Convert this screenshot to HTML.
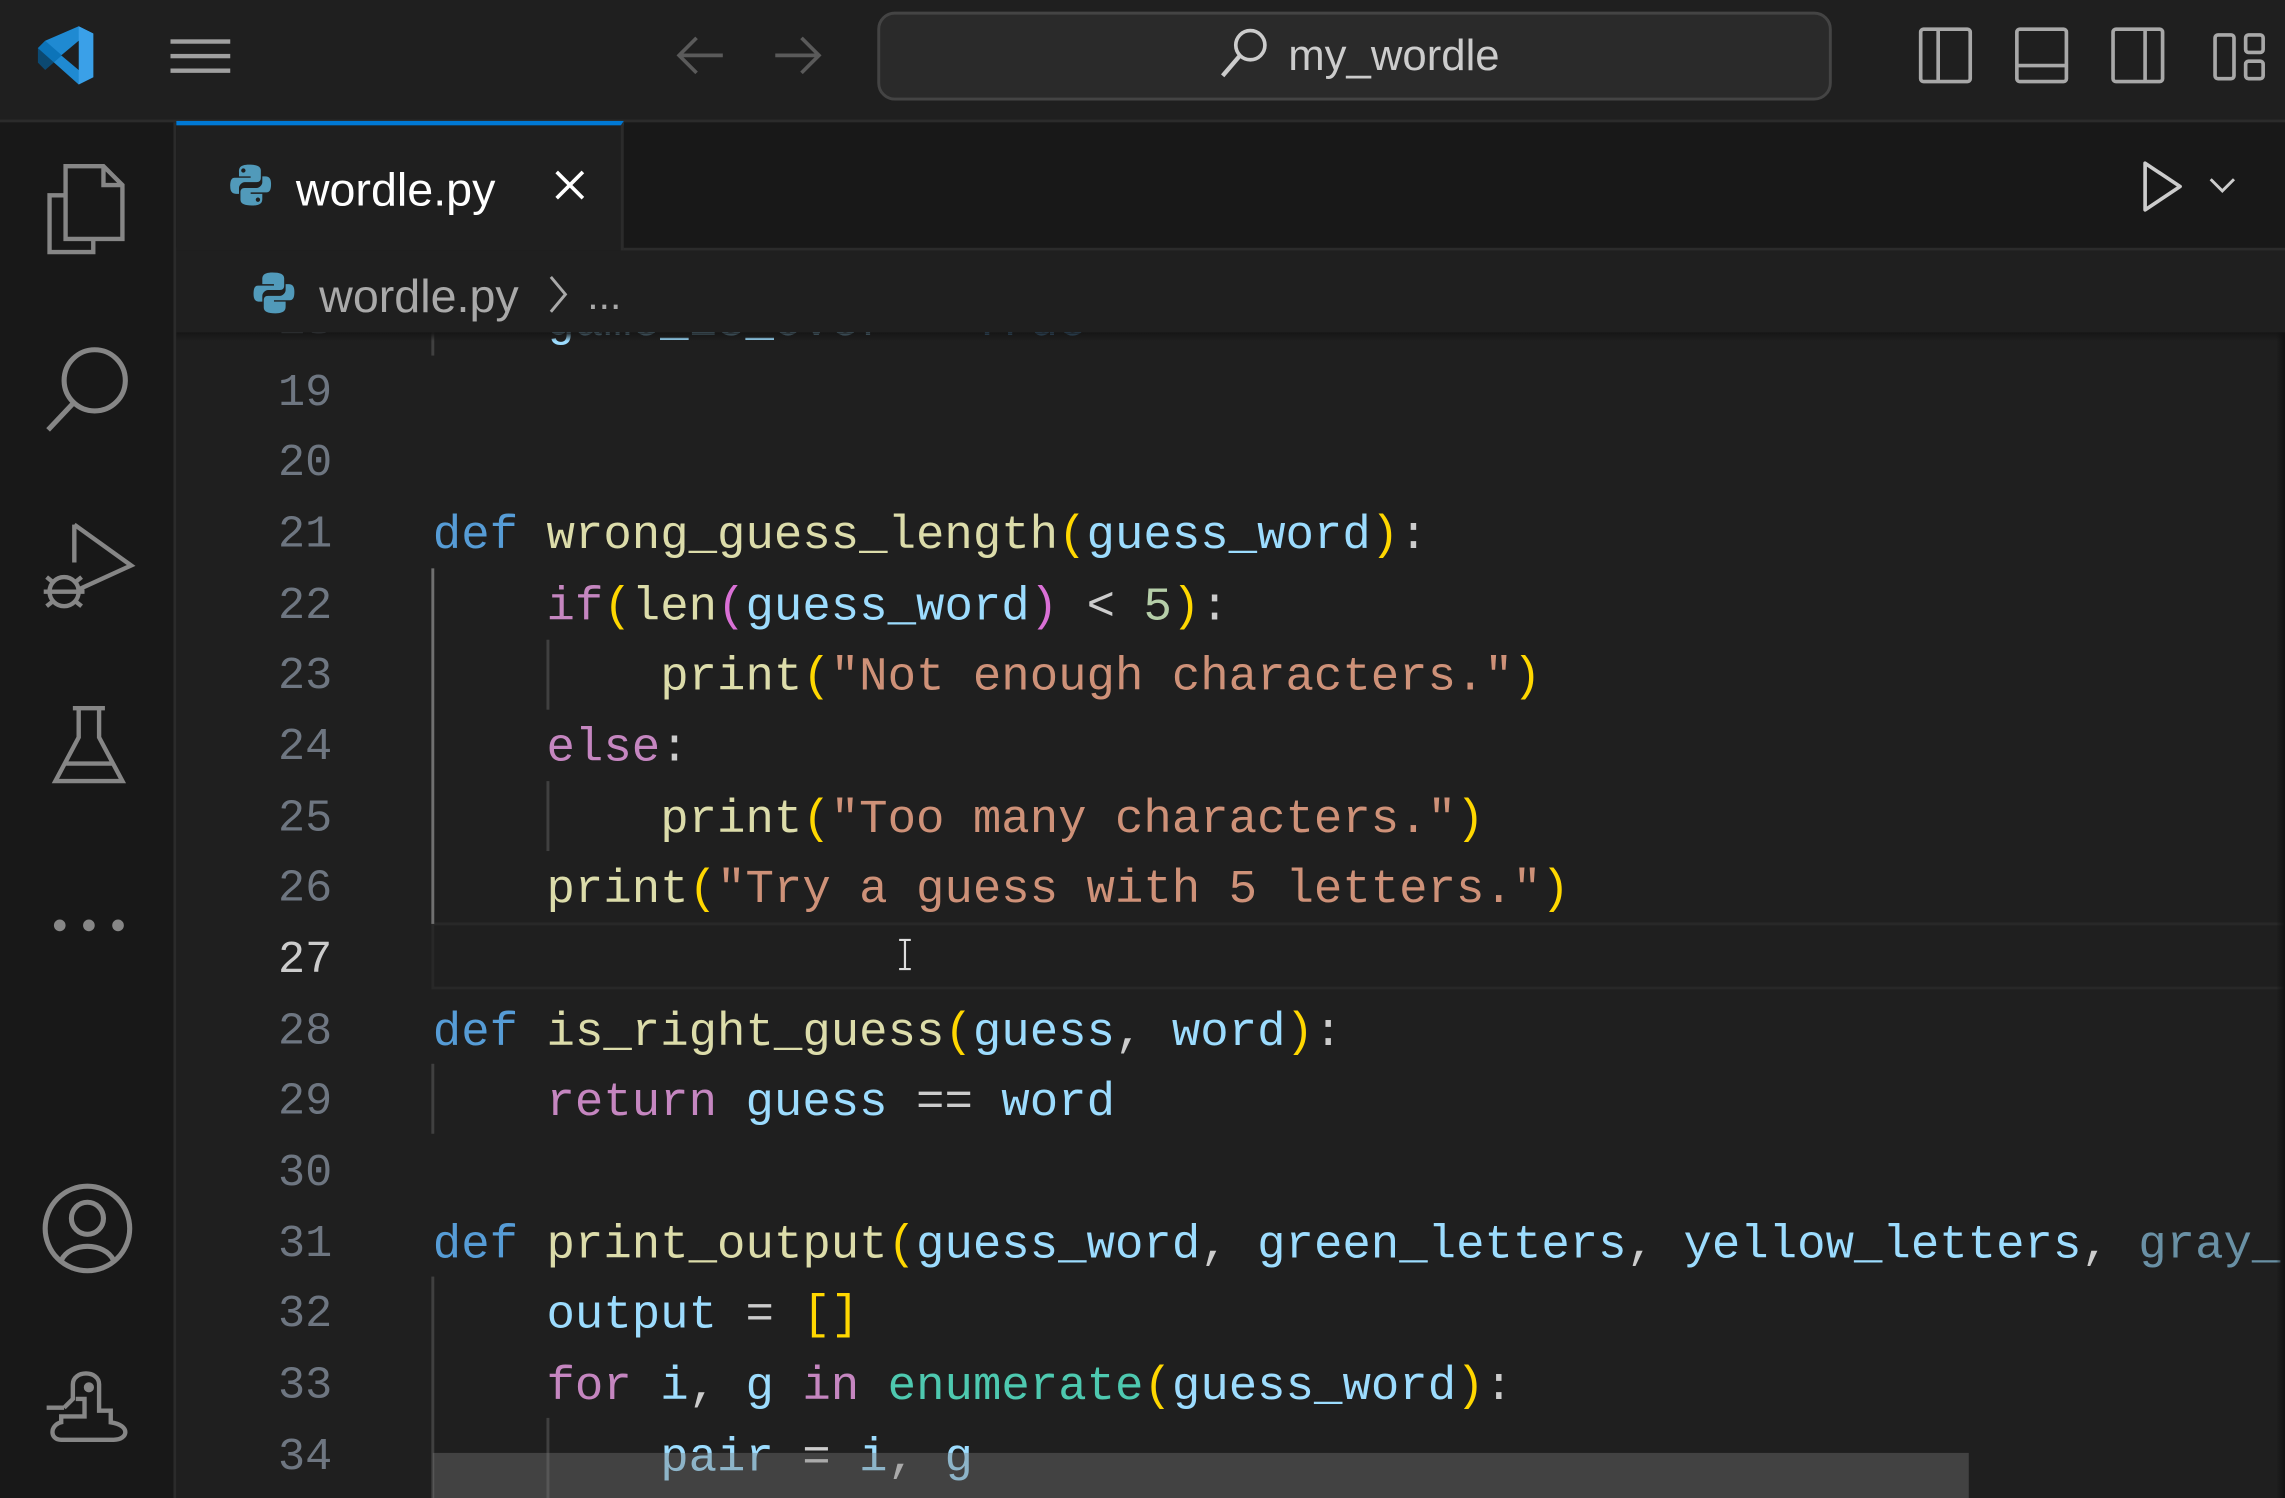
<!DOCTYPE html>
<html><head><meta charset="utf-8"><style>
html,body{margin:0;padding:0;background:#1f1f1f;overflow:hidden;width:2285px;height:1498px}
#r{position:absolute;left:0;top:0;width:1568px;height:1028px;transform:scale(1.45727);transform-origin:0 0;background:#1f1f1f;font-family:"Liberation Sans",sans-serif}
.a{position:absolute}
.code{position:absolute;left:0;top:0;font-family:"Liberation Mono",monospace;font-size:32.5px;white-space:pre;line-height:48.67px;letter-spacing:0}
.ln{position:absolute;left:130px;width:98px;text-align:right;color:#6e7681;font-family:"Liberation Mono",monospace;font-size:31px;line-height:48.67px}
.k{color:#569cd6}.f{color:#dcdcaa}.p{color:#9cdcfe}.c{color:#c586c0}.s{color:#ce9178}.y{color:#ffd700}.m{color:#da70d6}.w{color:#cccccc}.t{color:#4ec9b0}.n{color:#b5cea8}
svg{position:absolute;overflow:visible}
</style></head><body><div id="r">
<div class="a" style="left:0;top:0;width:1568px;height:82px;background:#1f1f1f;border-bottom:2px solid #2b2b2b"></div>
<svg style="left:22px;top:16px" width="44" height="44" viewBox="0 0 44 44">
<path d="M32 2 L42 7 V37 L32 42 L4 17 L9 12 Z" fill="#1f8ad2"/>
<path d="M32 2 L42 7 V37 L32 42 Z" fill="#3aa0e8"/>
<path d="M4 27 L9 32 L32 12 V32 L9 12 L4 17 Z" fill="#0065a9" opacity="0.6"/>
<path d="M32 12 V32 L20 22 Z" fill="#1f1f1f"/>
</svg>
<div class="a" style="left:117px;top:27px;width:41px;height:3px;background:#a0a0a0"></div>
<div class="a" style="left:117px;top:37px;width:41px;height:3px;background:#a0a0a0"></div>
<div class="a" style="left:117px;top:47px;width:41px;height:3px;background:#a0a0a0"></div>
<svg style="left:464px;top:24px" width="34" height="28"><path d="M2 14 H32 M14 2 L2 14 L14 26" stroke="#5a5a5a" stroke-width="2.5" fill="none"/></svg>
<svg style="left:530px;top:24px" width="34" height="28"><path d="M2 14 H32 M20 2 L32 14 L20 26" stroke="#5a5a5a" stroke-width="2.5" fill="none"/></svg>
<div class="a" style="left:602px;top:8px;width:651px;height:57px;border:2px solid #444;border-radius:12px;background:#2a2a2a"></div>
<svg style="left:836px;top:18px" width="36" height="38"><circle cx="22" cy="13" r="10" stroke="#cccccc" stroke-width="2.5" fill="none"/><path d="M15 20 L3 34" stroke="#cccccc" stroke-width="3"/></svg>
<div class="a" style="left:884px;top:21px;font-size:30px;color:#cccccc;line-height:36px">my_wordle</div>
<svg style="left:1317px;top:19px" width="240" height="40" fill="none" stroke="#a8a8a8" stroke-width="2.5">
<rect x="1" y="1" width="34" height="36" rx="2"/><path d="M13 1 V37"/>
<rect x="67" y="1" width="34" height="36" rx="2"/><path d="M67 26 H101"/>
<rect x="133" y="1" width="34" height="36" rx="2"/><path d="M155 1 V37"/>
<rect x="203" y="5" width="13" height="30" rx="2"/><rect x="224" y="5" width="12" height="12" rx="2"/><rect x="224" y="23" width="12" height="12" rx="2"/>
</svg>
<div class="a" style="left:0;top:84px;width:119px;height:944px;background:#181818;border-right:2px solid #2b2b2b"></div>
<svg style="left:30px;top:112px" width="60" height="66" fill="none" stroke="#868686" stroke-width="3">
<path d="M15 2 H41 L54 15 V52 H15 Z M41 2 V15 H54"/><path d="M15 22 H4 V61 H34 V52"/></svg>
<svg style="left:30px;top:236px" width="62" height="62" fill="none" stroke="#868686" stroke-width="3.5"><circle cx="35" cy="25" r="21"/><path d="M20 41 L3 59"/></svg>
<svg style="left:28px;top:358px" width="66" height="66" fill="none" stroke="#868686" stroke-width="3">
<path d="M23 2 V28 M23 2 L62 30 L27 46"/><ellipse cx="16" cy="48" rx="10" ry="10"/><path d="M2 48 H30 M4 38 L9 42 M4 58 L9 54 M28 38 L23 42 M28 58 L23 54"/></svg>
<svg style="left:36px;top:484px" width="50" height="58" fill="none" stroke="#868686" stroke-width="3"><path d="M14 2 H36 M18 2 V22 L2 52 H48 L32 22 V2 M8 40 H42"/></svg>
<svg style="left:36px;top:630px" width="50" height="10" fill="#868686"><circle cx="5" cy="5" r="4"/><circle cx="25" cy="5" r="4"/><circle cx="45" cy="5" r="4"/></svg>
<svg style="left:28px;top:812px" width="66" height="62" fill="none" stroke="#868686" stroke-width="3.5"><circle cx="32" cy="31" r="29"/><circle cx="32" cy="24" r="11"/><path d="M14 53 C20 40 44 40 50 53"/></svg>
<svg style="left:30px;top:938px" width="62" height="54" fill="none" stroke="#868686" stroke-width="3"><path d="M14 28 H2 M14 28 L20 22 V12 C20 2 38 2 38 12 V30 H46 V38 C60 40 58 50 48 50 H12 C4 50 4 40 12 38 V34 H28 V22 L22 22"/><circle cx="31" cy="14" r="2" fill="#868686"/></svg>
<div class="a" style="left:121px;top:84px;width:1447px;height:86px;background:#181818;border-bottom:2px solid #2b2b2b"></div>
<div class="a" style="left:121px;top:83px;width:307px;height:89px;background:#1f1f1f;border-top:3px solid #0078d4;border-right:2px solid #2b2b2b;box-sizing:border-box"></div>
<svg style="left:158px;top:112px" width="28" height="30" viewBox="0 0 28 30"><path d="M13 1 C6 1 6 4 6 6 V9 H14 V10 H3 C0 10 0 14 0 16 C0 19 1 21 4 21 H6 V17 C6 15 8 13 10 13 H18 C20 13 21 12 21 10 V5 C21 2 18 1 13 1Z M9 3.5 A1.5 1.5 0 1 1 9 6.5 A1.5 1.5 0 1 1 9 3.5Z" fill="#519aba"/><path d="M15 29 C22 29 22 26 22 24 V21 H14 V20 H25 C28 20 28 16 28 14 C28 11 27 9 24 9 H22 V13 C22 15 20 17 18 17 H10 C8 17 7 18 7 20 V25 C7 28 10 29 15 29Z M19 23.5 A1.5 1.5 0 1 1 19 26.5 A1.5 1.5 0 1 1 19 23.5Z" fill="#519aba"/></svg>
<div class="a" style="left:203px;top:111px;font-size:32px;color:#ffffff;line-height:38px">wordle.py</div>
<svg style="left:380px;top:116px" width="22" height="22"><path d="M2 2 L20 20 M20 2 L2 20" stroke="#ffffff" stroke-width="2.5"/></svg>
<svg style="left:1470px;top:110px" width="28" height="36"><path d="M2 2 L26 18 L2 34 Z" stroke="#cccccc" stroke-width="2.5" fill="none" stroke-linejoin="round"/></svg>
<svg style="left:1515px;top:121px" width="20" height="12"><path d="M2 2 L10 10 L18 2" stroke="#cccccc" stroke-width="2" fill="none"/></svg>
<div class="a" style="left:121px;top:172px;width:1447px;height:56px;background:#1f1f1f"></div>
<svg style="left:174px;top:186px" width="28" height="30" viewBox="0 0 28 30"><path d="M13 1 C6 1 6 4 6 6 V9 H14 V10 H3 C0 10 0 14 0 16 C0 19 1 21 4 21 H6 V17 C6 15 8 13 10 13 H18 C20 13 21 12 21 10 V5 C21 2 18 1 13 1Z" fill="#519aba"/><path d="M15 29 C22 29 22 26 22 24 V21 H14 V20 H25 C28 20 28 16 28 14 C28 11 27 9 24 9 H22 V13 C22 15 20 17 18 17 H10 C8 17 7 18 7 20 V25 C7 28 10 29 15 29Z" fill="#519aba"/></svg>
<div class="a" style="left:219px;top:184px;font-size:32px;color:#a9a9a9;line-height:38px">wordle.py</div>
<svg style="left:376px;top:188px" width="14" height="28"><path d="M2 2 L12 14 L2 26" stroke="#a9a9a9" stroke-width="2" fill="none"/></svg>
<div class="a" style="left:403px;top:184px;font-size:28px;color:#a9a9a9;line-height:38px">...</div>
<div class="a" style="left:121px;top:228px;width:1447px;height:800px;overflow:hidden;background:#1f1f1f">
 <div class="a" style="left:175px;top:405px;width:1300px;height:42px;border:2px solid #282828"></div>
 <div class="a" style="left:175px;top:0;width:2px;height:16px;background:#404040"></div>
 <div class="a" style="left:175px;top:162px;width:2px;height:244px;background:#707070"></div>
 <div class="a" style="left:254px;top:211px;width:2px;height:48px;background:#404040"></div>
 <div class="a" style="left:254px;top:308px;width:2px;height:48px;background:#404040"></div>
 <div class="a" style="left:175px;top:502px;width:2px;height:48px;background:#404040"></div>
 <div class="a" style="left:175px;top:648px;width:2px;height:152px;background:#404040"></div>
 <div class="a" style="left:254px;top:745px;width:2px;height:55px;background:#404040"></div>
 <div class="ln" style="left:9px;top:-30px">18</div>
 <div class="ln" style="left:9px;top:19px">19</div>
 <div class="ln" style="left:9px;top:67px">20</div>
 <div class="ln" style="left:9px;top:116px">21</div>
 <div class="ln" style="left:9px;top:165px">22</div>
 <div class="ln" style="left:9px;top:213px">23</div>
 <div class="ln" style="left:9px;top:262px">24</div>
 <div class="ln" style="left:9px;top:311px">25</div>
 <div class="ln" style="left:9px;top:359px">26</div>
 <div class="ln" style="left:9px;top:408px;color:#cccccc">27</div>
 <div class="ln" style="left:9px;top:457px">28</div>
 <div class="ln" style="left:9px;top:505px">29</div>
 <div class="ln" style="left:9px;top:554px">30</div>
 <div class="ln" style="left:9px;top:603px">31</div>
 <div class="ln" style="left:9px;top:651px">32</div>
 <div class="ln" style="left:9px;top:700px">33</div>
 <div class="ln" style="left:9px;top:749px">34</div>
 <div class="code" style="left:176px;top:-30px"><span class="p">    game_is_over</span><span class="w"> = </span><span class="k">True</span>


<span class="k">def</span> <span class="f">wrong_guess_length</span><span class="y">(</span><span class="p">guess_word</span><span class="y">)</span><span class="w">:</span>
    <span class="c">if</span><span class="y">(</span><span class="f">len</span><span class="m">(</span><span class="p">guess_word</span><span class="m">)</span><span class="w"> &lt; </span><span class="n">5</span><span class="y">)</span><span class="w">:</span>
        <span class="f">print</span><span class="y">(</span><span class="s">"Not enough characters."</span><span class="y">)</span>
    <span class="c">else</span><span class="w">:</span>
        <span class="f">print</span><span class="y">(</span><span class="s">"Too many characters."</span><span class="y">)</span>
    <span class="f">print</span><span class="y">(</span><span class="s">"Try a guess with 5 letters."</span><span class="y">)</span>

<span class="k">def</span> <span class="f">is_right_guess</span><span class="y">(</span><span class="p">guess</span><span class="w">, </span><span class="p">word</span><span class="y">)</span><span class="w">:</span>
    <span class="c">return</span> <span class="p">guess</span><span class="w"> == </span><span class="p">word</span>

<span class="k">def</span> <span class="f">print_output</span><span class="y">(</span><span class="p">guess_word</span><span class="w">, </span><span class="p">green_letters</span><span class="w">, </span><span class="p">yellow_letters</span><span class="w">, </span><span class="p" style="opacity:.6">gray_letters</span>
    <span class="p">output</span><span class="w"> = </span><span class="y">[]</span>
    <span class="c">for</span> <span class="p">i</span><span class="w">, </span><span class="p">g</span> <span class="c">in</span> <span class="t">enumerate</span><span class="y">(</span><span class="p">guess_word</span><span class="y">)</span><span class="w">:</span>
        <span class="p">pair</span><span class="w"> = </span><span class="p">i</span><span class="w">, </span><span class="p">g</span></div>
 <div class="a" style="left:0;top:0;width:1447px;height:6px;background:linear-gradient(#151515,rgba(31,31,31,0))"></div>
 <svg style="left:494px;top:416px" width="12" height="22"><path d="M2 1 H10 M6 1 V21 M2 21 H10" stroke="#dddddd" stroke-width="1.5"/></svg>
 <div class="a" style="left:176px;top:769px;width:1054px;height:40px;background:rgba(121,121,121,0.4)"></div>
 <div class="a" style="left:1441px;top:0;width:6px;height:800px;background:linear-gradient(90deg,rgba(0,0,0,0),#111)"></div>
</div>
</div></body></html>
